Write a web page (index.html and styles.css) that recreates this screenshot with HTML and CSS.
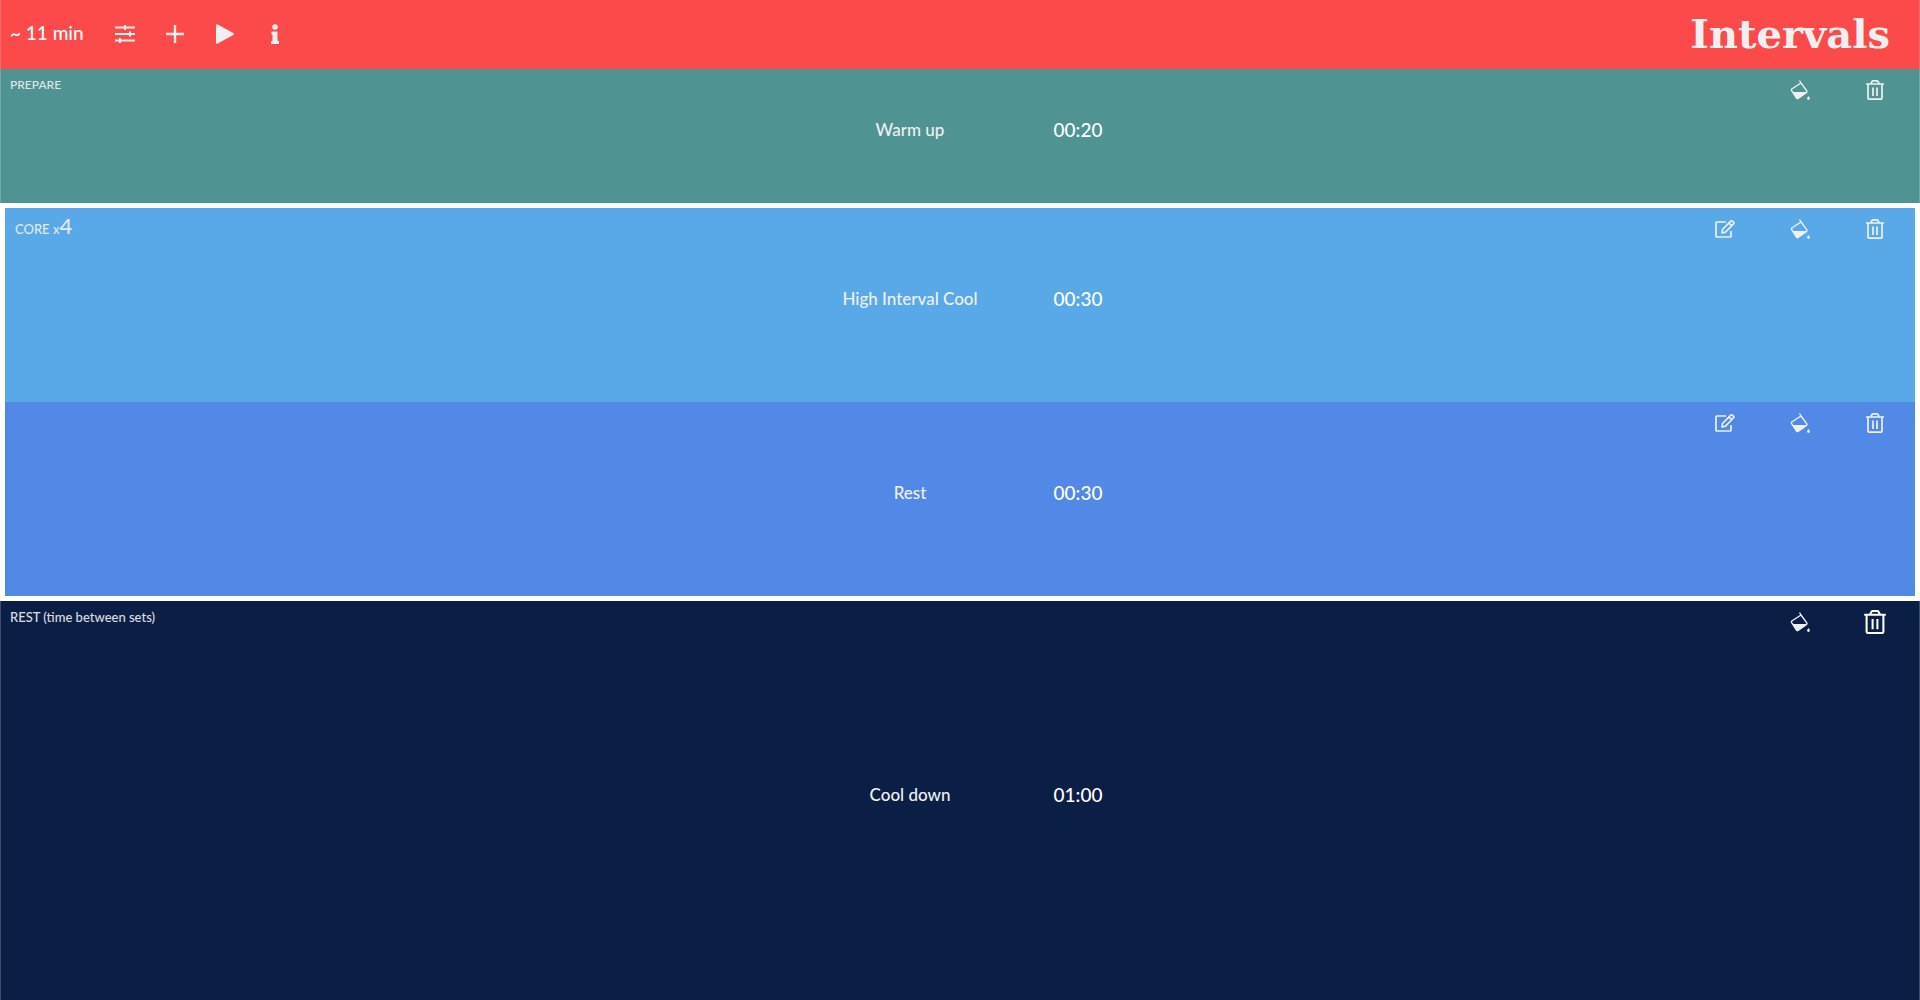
FILE: index.html
```html
<!DOCTYPE html>
<html lang="en">
<head>
<meta charset="utf-8">
<meta name="viewport" content="width=device-width, initial-scale=1">
<title>Intervals</title>
<link rel="stylesheet" href="styles.css">
</head>
<body>
<svg class="sprite" aria-hidden="true">
  <symbol id="edit" viewBox="0 0 20 20">
    <path d="M11 3H2Q1 3 1 4V17Q1 18 2 18H15Q16 18 16 17V12M7 14L7.500 10.500L15.500 2.300Q16.500 1.300 17.600 2.300L18.400 3.100Q19.300 4.100 18.400 5L10.500 13.200ZM14 4L17 7" fill="none" stroke="currentColor" stroke-width="1.700" stroke-linejoin="round"/>
  </symbol>
  <symbol id="fill" viewBox="0 0 20 20">
    <path d="M9.500 .5L11 3M11 3L1.800 9Q1 9.600 1.500 10.400L6.500 18Q7.200 18.800 8 18.300L16.300 12.600Q17.400 11.800 16.800 10.900Z" fill="none" stroke="currentColor" stroke-width="1.400" stroke-linejoin="round"/>
    <path d="M2.500 12H17L8 19Q7 19.500 6.300 18.400ZM18.500 16Q19.900 17.800 19.900 18.600Q19.700 20 18.500 20Q17.200 20 17 18.600Q17.100 17.800 18.500 16Z" fill="currentColor"/>
  </symbol>
  <symbol id="trash" viewBox="0 0 20 20">
    <path d="M1 4H19M3 4V18Q3 19.200 4.200 19.200H15.800Q17 19.200 17 18V4M6 3.500L7 1.500Q7.400 .9 8 .9H12Q12.600 .9 13 1.500L14 3.500M8 7.500V16M12 7.500V16" fill="none" stroke="currentColor" stroke-width="1.700"/>
  </symbol>
</svg>
<header class="topbar">
  <span class="total">~ 11 min</span>
  <button class="tool" aria-label="Settings"><svg class="icon" viewBox="0 0 20 20"><path d="M0 3.500H20M0 10H20M0 16.500H20M10 1V6M15 7.500V12.500M5 14V19" fill="none" stroke="currentColor" stroke-width="2"/></svg></button>
  <button class="tool" aria-label="Add"><svg class="icon" viewBox="0 0 20 20"><path d="M10 1V19M1 10H19" fill="none" stroke="currentColor" stroke-width="2.400"/></svg></button>
  <button class="tool" aria-label="Play"><svg class="icon" viewBox="0 0 20 20"><path d="M1 1.500Q1 0 2.300 .2L18.300 9Q19.600 10 18.300 11L2.300 19.800Q1 20 1 18.500Z" fill="currentColor"/></svg></button>
  <button class="tool" aria-label="Information"><svg class="icon" viewBox="0 0 20 20"><path d="M6.500 7.500H12.500V17H14V20H6V17H7.500V10.500H6.500Z" fill="currentColor"/><circle cx="10" cy="3" r="2.800" fill="currentColor"/></svg></button>
  <h1 class="brand">Intervals</h1>
</header>
<main class="workout">
  <section class="block prepare">
    <h2 class="label">PREPARE</h2>
    <div class="actions">
      <button class="action" aria-label="Change color"><svg class="icon"><use href="#fill"/></svg></button>
      <button class="action" aria-label="Delete"><svg class="icon"><use href="#trash"/></svg></button>
    </div>
    <div class="entry"><span class="name">Warm up</span><time class="time">00:20</time></div>
  </section>
  <div class="core">
    <section class="block high">
      <h2 class="label">CORE x<span class="count">4</span></h2>
      <div class="actions">
        <button class="action" aria-label="Edit"><svg class="icon"><use href="#edit"/></svg></button>
        <button class="action" aria-label="Change color"><svg class="icon"><use href="#fill"/></svg></button>
        <button class="action" aria-label="Delete"><svg class="icon"><use href="#trash"/></svg></button>
      </div>
      <div class="entry"><span class="name">High Interval Cool</span><time class="time">00:30</time></div>
    </section>
    <section class="block low">
      <div class="actions">
        <button class="action" aria-label="Edit"><svg class="icon"><use href="#edit"/></svg></button>
        <button class="action" aria-label="Change color"><svg class="icon"><use href="#fill"/></svg></button>
        <button class="action" aria-label="Delete"><svg class="icon"><use href="#trash"/></svg></button>
      </div>
      <div class="entry"><span class="name">Rest</span><time class="time">00:30</time></div>
    </section>
  </div>
  <section class="block rest">
    <h2 class="label">REST (time between sets)</h2>
    <div class="actions">
      <button class="action" aria-label="Change color"><svg class="icon"><use href="#fill"/></svg></button>
      <button class="action" aria-label="Delete"><svg class="icon large"><use href="#trash"/></svg></button>
    </div>
    <div class="entry"><span class="name">Cool down</span><time class="time">01:00</time></div>
  </section>
</main>
</body>
</html>
```
FILE: styles.css
```css
* { box-sizing: border-box; }

body {
  margin: 0;
  min-height: 100vh;
  display: flex;
  flex-direction: column;
  font-family: Lato, "Open Sans", sans-serif;
  color: #f0f0f0;
  background: #fff;
}

.sprite { display: none; }

button {
  display: flex;
  align-items: center;
  justify-content: center;
  padding: 0;
  border: 0;
  background: none;
  color: inherit;
  cursor: pointer;
}

.icon { width: 20px; height: 20px; flex: none; }
.large { width: 24px; height: 24px; color: #fff; }

.topbar {
  display: flex;
  align-items: center;
  height: 69px;
  padding: 0 29px 2px 9px;
  background: #fb4a49;
  border-left: 1px solid #fb6a69;
  border-right: 1px solid #fb6a69;
}

.total { width: 90px; padding-bottom: 2px; font-size: 19px; line-height: 24px; font-weight: 500; color: #fff; }
.tool { width: 50px; height: 50px; }

.brand {
  margin: 0 0 0 auto;
  font: bold 40px/48px "DejaVu Serif", serif;
}

.workout { flex: 1; display: flex; flex-direction: column; }

.block {
  display: grid;
  grid-template-columns: 1fr auto;
  grid-template-rows: 42px 1fr;
  border: 0 solid rgba(255, 255, 255, 0.2);
}

.prepare, .rest { border-width: 0 1px; }
.prepare { height: 134px; background: #4f9393; }
.core { border: 5px solid #fff; }
.high, .low { height: 194px; }
.high { background: #59a9e8; }
.low { background: #5289e6; }
.rest { flex: 1; background: #0a1e46; }

.label {
  grid-area: 1 / 1;
  margin: 0;
  padding: 6px 9px;
  font-size: 13px;
  line-height: 20px;
  font-weight: 500;
  opacity: 0.9;
}

.prepare .label { font-size: 12px; }
.high .label { padding: 8px 10px; }
.count { font-size: 22px; }

.actions { grid-area: 1 / 2; display: flex; padding-right: 7px; }
.high .actions, .low .actions { padding-right: 3px; }
.action { width: 75px; height: 42px; }

.entry {
  grid-area: 1 / 1 / 3 / 3;
  justify-self: center;
  align-self: center;
  display: grid;
  grid-template-columns: 168px 168px;
  align-items: center;
  padding: 0 0 12px 68px;
  text-align: center;
  line-height: 24px;
}

.name { font-size: 17px; font-weight: 500; }
.time { font-size: 19px; font-weight: 500; color: #fff; }
```
